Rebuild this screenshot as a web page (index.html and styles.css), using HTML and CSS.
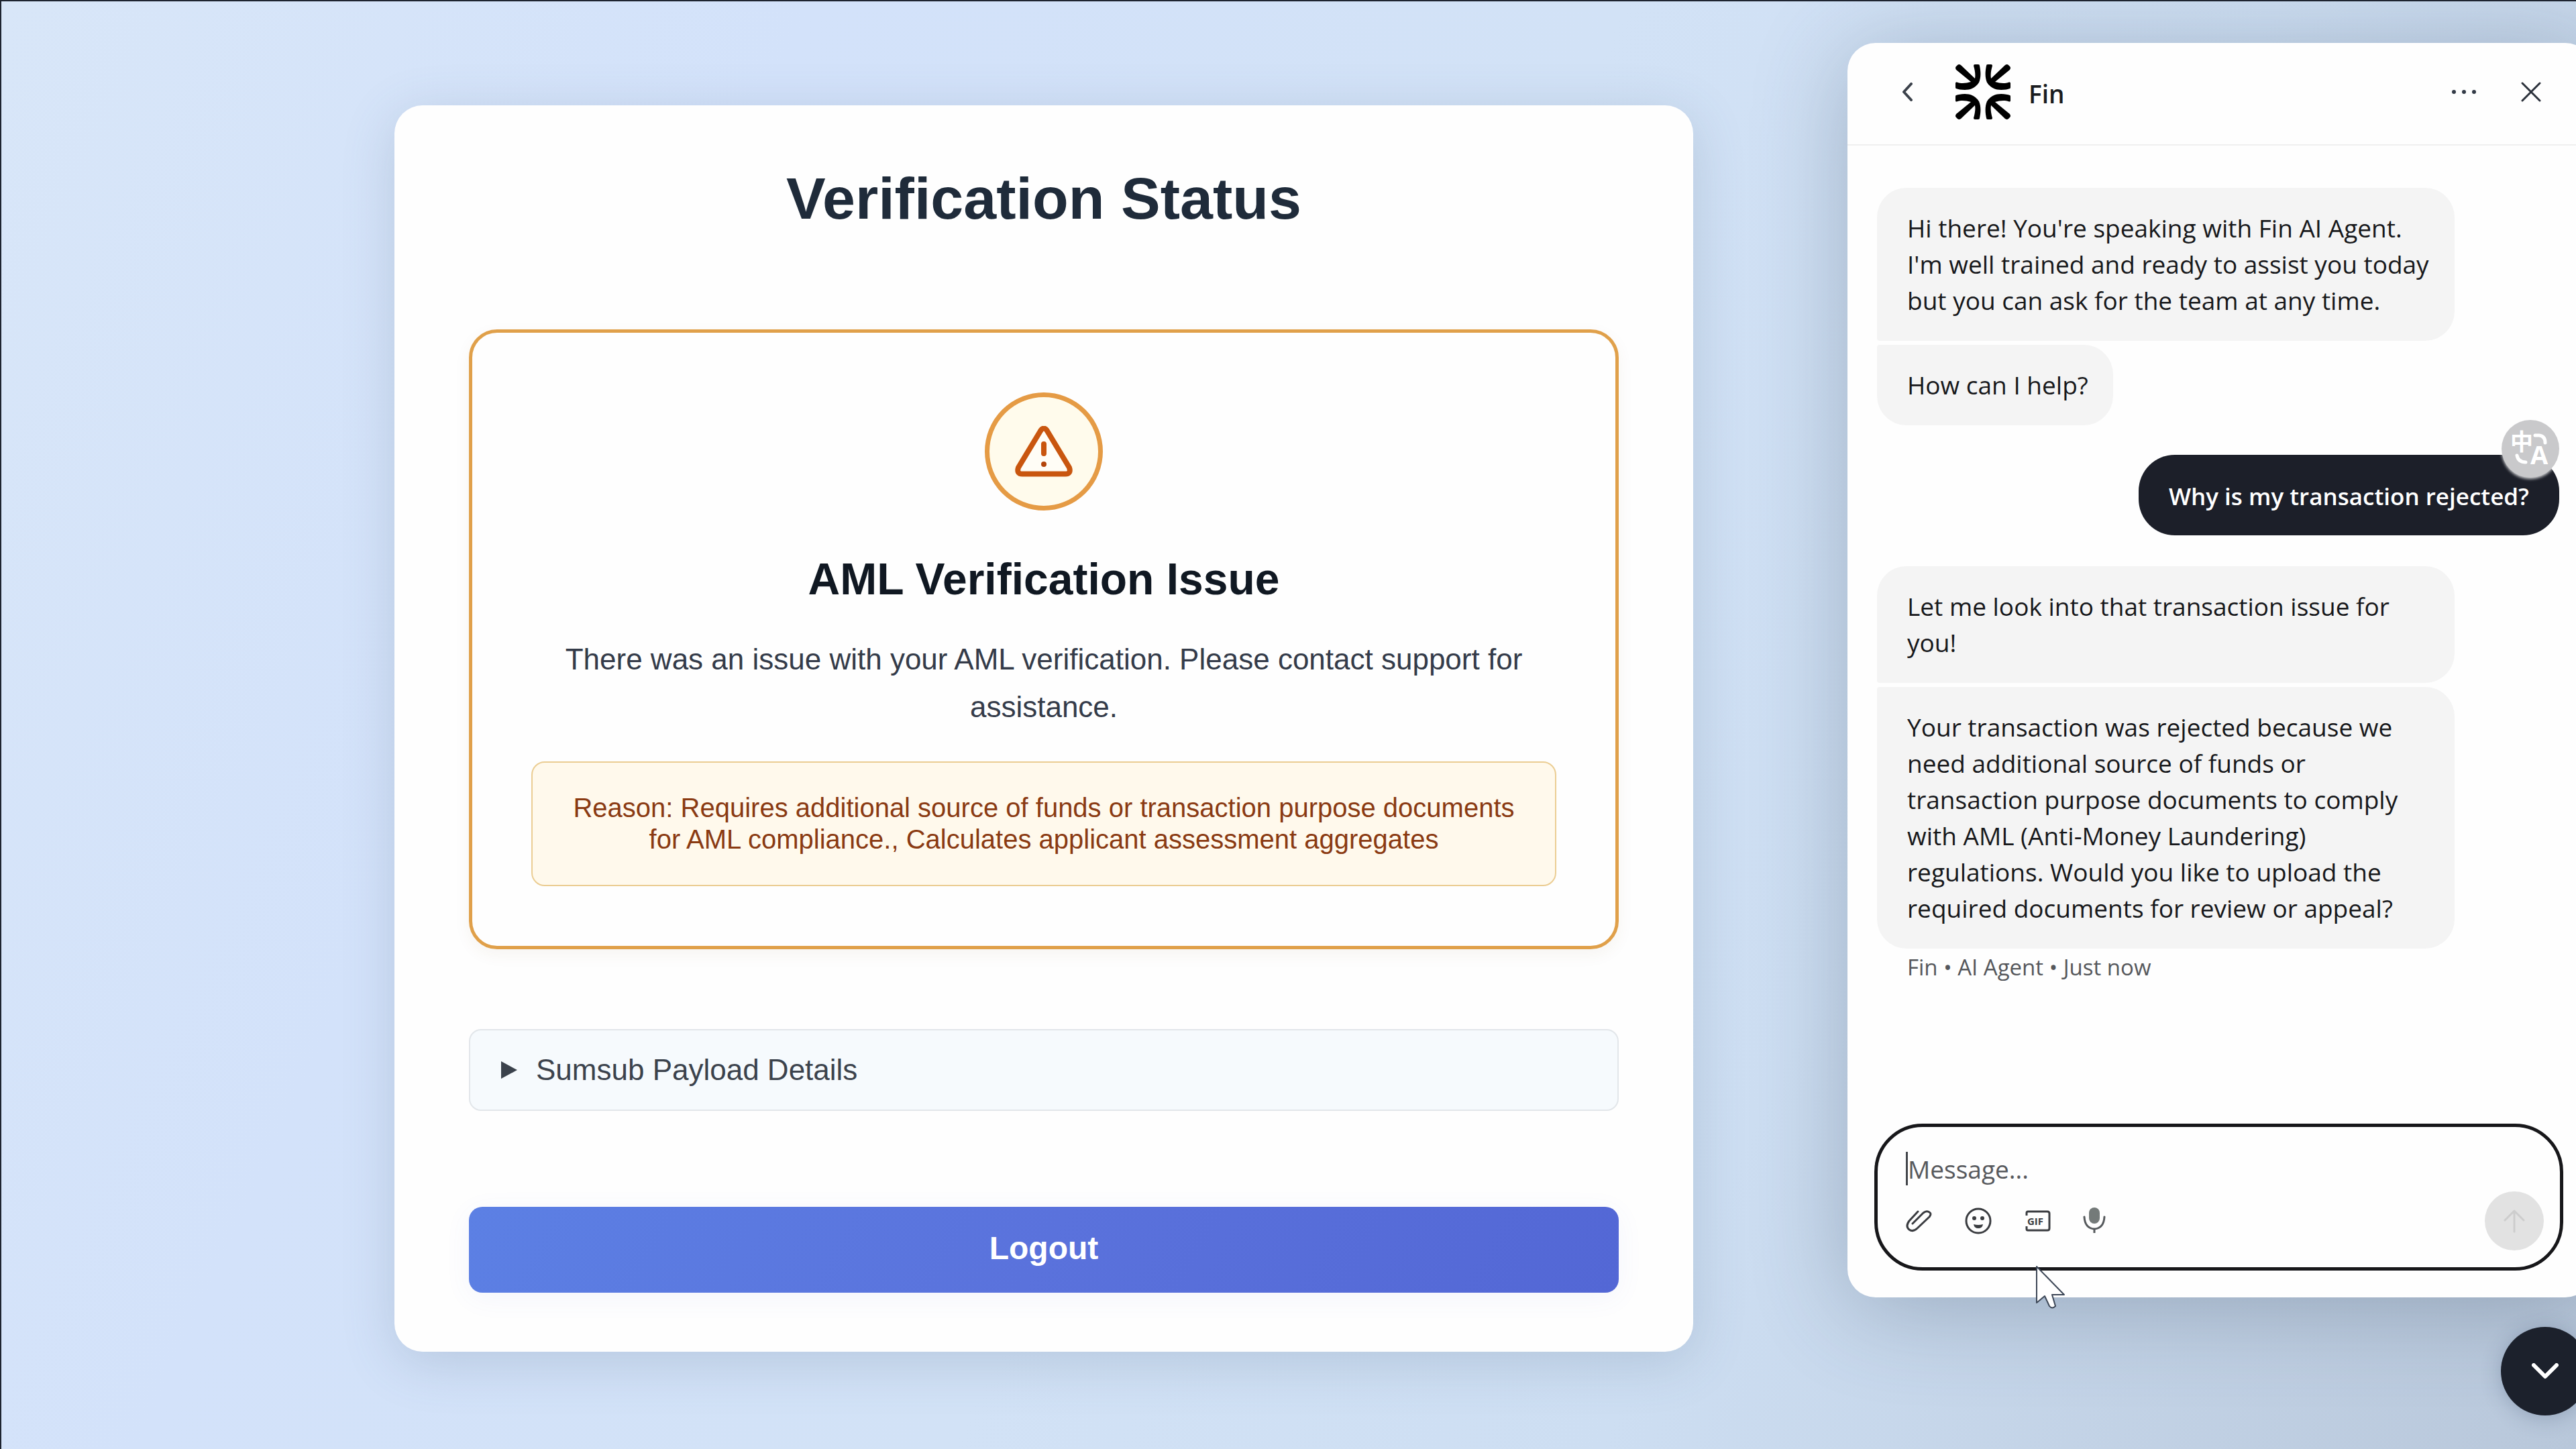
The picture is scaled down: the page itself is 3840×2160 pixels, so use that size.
FILE: index.html
```
<!DOCTYPE html>
<html lang="en">
<head>
<meta charset="UTF-8">
<meta name="viewport" content="width=device-width, initial-scale=1.0">
<title>Verification Status</title>
<link rel="stylesheet" href="styles.css">
</head>
<body>
<div class="page">
    <main class="main">
        <section class="card">
            <h1>Verification Status</h1>

            <div class="status-box">
                <div class="status-icon">
                    <svg viewBox="0 0 86 76" width="86" height="76" aria-hidden="true">
                        <path d="M38.500 6.500 Q43 0.500 47.500 6.500 L81 62 Q84 71.500 75 71.500 L11 71.500 Q2 71.500 5 62 Z" fill="#fffdf6" stroke="#c9560f" stroke-width="8" stroke-linejoin="round"/>
                        <path d="M43 27 V41" stroke="#c9560f" stroke-width="8" stroke-linecap="round"/>
                        <circle cx="43" cy="57" r="4" fill="#b3440a"/>
                    </svg>
                </div>
                <h2>AML Verification Issue</h2>
                <p class="status-text">There was an issue with your AML verification. Please contact support for assistance.</p>
                <p class="reason">Reason: Requires additional source of funds or transaction purpose documents for AML compliance., Calculates applicant assessment aggregates</p>
            </div>

            <details class="payload">
                <summary>Sumsub Payload Details</summary>
            </details>

            <button type="button" class="logout">Logout</button>
        </section>
    </main>

    <aside class="widget">
        <section class="chat">
            <header class="chat-header">
                <button type="button" class="icon-btn back" aria-label="Back">
                    <svg viewBox="0 0 16 28" width="16" height="28"><path d="M14 2 L3 14 L14 26" fill="none" stroke="#3c424b" stroke-width="4" stroke-linecap="round" stroke-linejoin="round"/></svg>
                </button>
                <!-- Fin logo : one arrow, mirrored into 4 corners -->
                <svg class="fin-logo" viewBox="0 0 82 82" width="82" height="82" aria-hidden="true">
                    <defs>
                        <path id="ray" d="M27 2 Q27 0 29 0 L34 0 Q36 0 36 2 C38 12 38 20 35 27 C30 35 22 38 14 38 C8 38 4 37 1 36 Q0 36 0 34 L0 28 Q0 26 2 26.500 C9 29 16 28 23 26 L1 8 Q-1 5 1 3 L3 1 Q5 -1 8 1 L29 21 C30 15 29 9 27 2 Z"/>
                    </defs>
                    <use href="#ray"/>
                    <use href="#ray" transform="translate(82 0) scale(-1 1)"/>
                    <use href="#ray" transform="translate(0 82) scale(1 -1)"/>
                    <use href="#ray" transform="translate(82 82) scale(-1 -1)"/>
                </svg>
                <h3>Fin</h3>
                <button type="button" class="icon-btn more" aria-label="More">
                    <svg viewBox="0 0 38 8" width="38" height="8" fill="#333b47"><circle cx="4" cy="4" r="3"/><circle cx="19" cy="4" r="3"/><circle cx="34" cy="4" r="3"/></svg>
                </button>
                <button type="button" class="icon-btn" aria-label="Close">
                    <svg viewBox="0 0 30 30" width="30" height="30"><path d="M2 2 L28 28 M28 2 L2 28" stroke="#2b313b" stroke-width="3" stroke-linecap="round"/></svg>
                </button>
            </header>

            <div class="messages">
                <div class="group">
                    <p class="bubble first">Hi there! You're speaking with Fin AI Agent. I'm well trained and ready to assist you today but you can ask for the team at any time.</p>
                    <p class="bubble last">How can I help?</p>
                </div>
                <div class="mine">
                    <p class="bubble user">Why is my transaction rejected?</p>
                    <button type="button" class="translate" aria-label="Translate">
                        <svg viewBox="0 0 86 86" width="86" height="86" aria-hidden="true">
                            <text class="zh" x="30" y="45" text-anchor="middle">中</text>
                            <text class="en" x="56" y="66" text-anchor="middle">A</text>
                            <path d="M50 23 H56 Q65 24 65 34" fill="none" stroke="#fff" stroke-width="5" stroke-linecap="round"/>
                            <path d="M23 53 Q25 63 36 63" fill="none" stroke="#fff" stroke-width="5" stroke-linecap="round"/>
                        </svg>
                    </button>
                </div>
                <div class="group">
                    <p class="bubble first">Let me look into that transaction issue for you!</p>
                    <p class="bubble last">Your transaction was rejected because we need additional source of funds or transaction purpose documents to comply with AML (Anti-Money Laundering) regulations. Would you like to upload the required documents for review or appeal?</p>
                </div>
                <p class="meta">Fin • AI Agent • Just now</p>
            </div>

            <form class="composer">
                <div class="field">
                    <span class="caret"></span>
                    <input type="text" placeholder="Message..." aria-label="Message">
                </div>
                <div class="tools">
                    <button type="button" class="icon-btn" aria-label="Attach file">
                        <svg viewBox="0 0 40 40" width="40" height="40"><path d="M18 6 L5 20 Q-1 28 5 33 Q11 37 17 31 L35 14 Q39 9 35 7 Q31 4 26 8 L10 24" fill="none" stroke="#3a3c40" stroke-width="3" stroke-linecap="round" stroke-linejoin="round"/></svg>
                    </button>
                    <button type="button" class="icon-btn" aria-label="Emoji">
                        <svg viewBox="0 0 40 40" width="40" height="40"><circle cx="20" cy="20" r="18" fill="none" stroke="#3a3c40" stroke-width="3"/><circle cx="14" cy="16" r="3" fill="#3a3c40"/><circle cx="26" cy="16" r="3" fill="#3a3c40"/><path d="M13 25 Q20 27 27 25 Q26 31 20 31 Q14 31 13 25 Z" fill="#3a3c40"/></svg>
                    </button>
                    <button type="button" class="icon-btn" aria-label="GIF">
                        <svg viewBox="0 0 40 40" width="40" height="40"><path d="M4 12 V8 Q4 6 6 6 H35 Q38 6 38 9 V31 Q38 34 35 34 H6 Q4 34 4 32 V28" fill="none" stroke="#3a3c40" stroke-width="3"/><text class="gif" x="17" y="26" text-anchor="middle">GIF</text></svg>
                    </button>
                    <button type="button" class="icon-btn" aria-label="Voice">
                        <svg viewBox="0 0 34 40" width="34" height="40"><rect x="9" y="0" width="16" height="24" rx="8" fill="#747a79"/><path d="M2 14 Q3 31 17 32 Q31 31 32 14" fill="none" stroke="#55595c" stroke-width="3" stroke-linecap="round"/><path d="M17 32 V38" stroke="#55595c" stroke-width="3"/></svg>
                    </button>
                    <button type="submit" class="send" aria-label="Send" disabled>
                        <svg viewBox="0 0 32 36" width="32" height="36"><path d="M16 34 V3 M2 17 L16 3 L30 17" fill="none" stroke="#cdcdcd" stroke-width="3" stroke-linecap="round" stroke-linejoin="round"/></svg>
                    </button>
                </div>
            </form>
        </section>

        <button type="button" class="launcher" aria-label="Close chat">
            <svg viewBox="0 0 40 24" width="40" height="24"><path d="M3 3 L20 20 L37 3" fill="none" stroke="#fff" stroke-width="6" stroke-linecap="round" stroke-linejoin="round"/></svg>
        </button>
    </aside>
</div>

<!-- mouse pointer -->
<svg class="pointer" viewBox="0 0 48 70" width="48" height="70" aria-hidden="true">
    <path d="M3 3 V57 L15 47 L22 62 Q26 67 31 62 L26 45 H44 Z" fill="#fff" stroke="#3c4656" stroke-width="2" stroke-linejoin="round"/>
</svg>
</body>
</html>
```
FILE: styles.css
```
* {
    box-sizing: border-box;
}
body {
    margin: 0;
    font-family: "Liberation Sans", Arial, sans-serif;
}
h1, h2, h3, p {
    margin: 0;
}
button {
    font-family: inherit;
    border: none;
    padding: 0;
    cursor: pointer;
}
svg {
    display: block;
}

.page {
    display: grid;
    grid-template-columns: minmax(0, 1fr) 1086px;
    min-height: 100vh;
    overflow: hidden;
    border-top: 2px solid #1e2430;
    border-left: 2px solid #1e2430;
    background: linear-gradient(115deg, #d8e6f8 0%, #d3e2fa 25%, #d2e2f6 50%, #cddef2 70%, #b8c7da 100%);
}

/* ---- verification card ---- */
.main {
    padding: 155px 230px 143px 586px;
}
.card {
    padding: 87px 111px 88px;
    border-radius: 42px;
    background: #fefefe;
    box-shadow: 0 16px 80px rgba(70, 95, 125, 0.2);
    text-align: center;
}
.card h1 {
    margin-bottom: 143px;
    font-size: 88px;
    line-height: 104px;
    color: #1f2b3a;
}
.status-box {
    padding: 89px 88px;
    border: 5px solid #e0a04a;
    border-radius: 42px;
    box-shadow: 0 8px 24px rgba(120, 90, 40, 0.06);
}
.status-icon {
    display: flex;
    align-items: center;
    justify-content: center;
    width: 176px;
    height: 176px;
    margin: 0 auto 62px;
    border: 7px solid #e59b45;
    border-radius: 50%;
    background: #fffbec;
}
.status-box h2 {
    margin-bottom: 44px;
    font-size: 66px;
    line-height: 80px;
    color: #101822;
}
.status-text {
    margin-bottom: 46px;
    font-size: 44px;
    line-height: 71px;
    color: #343b49;
}
.reason {
    padding: 44px 60px;
    border: 2px solid #ebcd93;
    border-radius: 20px;
    background: #fff9ec;
    font-size: 40px;
    line-height: 47px;
    color: #8a3a12;
}
.payload {
    margin: 119px 0 143px;
    border: 2px solid #e2e6ea;
    border-radius: 18px;
    background: #f6fafd;
    text-align: left;
}
.payload summary {
    display: flex;
    align-items: center;
    gap: 28px;
    padding: 33px 46px;
    list-style: none;
    font-size: 44px;
    line-height: 52px;
    color: #3b424c;
    cursor: pointer;
}
.payload summary::before {
    content: "";
    border-left: 24px solid #3b424c;
    border-top: 13px solid transparent;
    border-bottom: 13px solid transparent;
}
.logout {
    display: block;
    width: 100%;
    height: 128px;
    padding-bottom: 6px;
    border-radius: 20px;
    background: linear-gradient(120deg, #5c80e4 0%, #5a72dc 50%, #5367d5 100%);
    box-shadow: 0 8px 40px rgba(80, 110, 220, 0.06);
    font-size: 48px;
    font-weight: bold;
    color: #fff;
}

/* ---- chat widget ---- */
.widget {
    display: flex;
    flex-direction: column;
    margin-right: -26px;
    padding-top: 62px;
    font-family: "Open Sans", "Noto Sans", sans-serif;
}
.chat {
    border-radius: 42px;
    background: #fefefe;
    box-shadow: 0 16px 140px rgba(60, 78, 100, 0.32);
}
.icon-btn {
    background: none;
}
.chat-header {
    display: flex;
    align-items: center;
    height: 153px;
    padding: 0 78px 5px 81px;
    border-bottom: 2px solid #f0f0f0;
}
.fin-logo {
    margin: 0 27px 0 64px;
}
.chat-header h3 {
    flex: 1;
    padding-top: 6px;
    font-size: 37px;
    font-weight: 600;
    line-height: 48px;
    color: #1a1c20;
}
.more {
    margin-right: 66px;
}
.messages {
    display: flex;
    flex-direction: column;
    padding: 63px 51px 0 44px;
}
.group {
    display: flex;
    flex-direction: column;
    align-items: flex-start;
    gap: 6px;
}
.bubble {
    max-width: 861px;
    padding: 33px 37px 33px 45px;
    border-radius: 44px;
    background: #f4f4f4;
    font-size: 37px;
    line-height: 54px;
    color: #17181b;
}
.first {
    border-bottom-left-radius: 4px;
}
.last {
    border-top-left-radius: 4px;
}
.mine {
    position: relative;
    align-self: flex-end;
    margin: 44px 0 46px;
}
.user {
    padding: 35px 45px 31px;
    border-radius: 54px;
    background: #1c1f29;
    font-size: 35px;
    font-weight: 600;
    color: #fff;
}
.translate {
    position: absolute;
    top: -52px;
    right: 0;
    border-radius: 50%;
    background: #c9c9cb;
    box-shadow: 0 2px 4px rgba(255, 255, 255, 0.8);
}
.zh {
    font: bold 34px "Noto Sans CJK SC", sans-serif;
    fill: #fff;
}
.en {
    font: bold 38px "Open Sans", sans-serif;
    fill: #fff;
}
.meta {
    padding: 6px 45px;
    font-size: 33px;
    line-height: 44px;
    color: #55575b;
}
.composer {
    margin: 205px 45px 40px 40px;
    padding: 34px 24px 25px 42px;
    border: 5px solid #17171a;
    border-radius: 72px;
}
.field {
    display: flex;
    align-items: center;
    height: 56px;
}
.caret {
    width: 3px;
    height: 50px;
    background: #44474c;
}
.field input {
    flex: 1;
    min-width: 0;
    padding: 0;
    border: none;
    outline: none;
    background: none;
    font-family: inherit;
    font-size: 37px;
    color: #17181b;
}
.field input::placeholder {
    color: #56585c;
    opacity: 1;
}
.tools {
    display: flex;
    align-items: center;
    gap: 48px;
    margin-top: 6px;
}
.gif {
    font: bold 15px "Open Sans", sans-serif;
    fill: #3a3c40;
}
.send {
    display: flex;
    align-items: center;
    justify-content: center;
    width: 88px;
    height: 88px;
    margin-left: auto;
    border-radius: 50%;
    background: #e2e2e2;
}
.launcher {
    display: flex;
    align-items: center;
    justify-content: center;
    align-self: flex-end;
    width: 132px;
    height: 132px;
    margin: 44px 6px 0 0;
    border-radius: 50%;
    background: #1c212c;
    box-shadow: 0 4px 30px rgba(40, 60, 90, 0.25);
}
.pointer {
    position: absolute;
    left: 3033px;
    top: 1885px;
}
```
